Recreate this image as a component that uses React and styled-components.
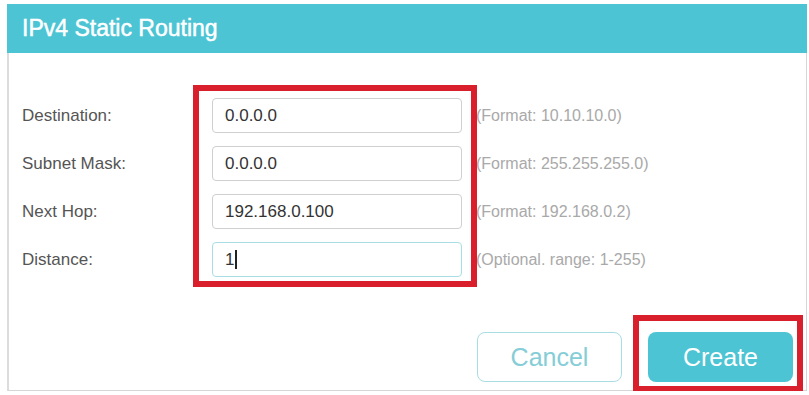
import React from "react";
import styled, { createGlobalStyle } from "styled-components";

const GlobalStyle = createGlobalStyle`
  html, body {
    margin: 0;
    padding: 0;
    background: #ffffff;
    font-family: "Liberation Sans", Arial, sans-serif;
  }
`;

const TEAL = "#4cc4d4";
const RED = "#d81f2b";

const App = () => {
  const rows = [
    { label: "Destination:", value: "0.0.0.0", hint: "(Format: 10.10.10.0)" },
    { label: "Subnet Mask:", value: "0.0.0.0", hint: "(Format: 255.255.255.0)" },
    { label: "Next Hop:", value: "192.168.0.100", hint: "(Format: 192.168.0.2)" },
    { label: "Distance:", value: "1", hint: "(Optional. range: 1-255)", focused: true },
  ];

  return (
    <>
      <GlobalStyle />
      <Panel>
        <Header>IPv4 Static Routing</Header>
        <Body>
          <Form>
            {rows.map((r, i) => (
              <React.Fragment key={i}>
                <Label $row={i + 1}>{r.label}</Label>
                <Field $row={i + 1} $focused={r.focused}>
                  {r.value}
                  {r.focused && <Caret />}
                </Field>
                <Hint $row={i + 1}>{r.hint}</Hint>
              </React.Fragment>
            ))}
            <Highlight />
          </Form>
          <Footer>
            <CancelButton>Cancel</CancelButton>
            <Marked>
              <CreateButton>Create</CreateButton>
            </Marked>
          </Footer>
        </Body>
      </Panel>
    </>
  );
};

export default App;

// ---------------- Styled Components ----------------
const Panel = styled.div`
  margin: 4px 0 0 7px;
  width: 800px;
  height: 387px;
  box-sizing: border-box;
  border: 1px solid #d6d6d6;
  border-top: none;
  border-left: 2px solid #dcdcdc;
  background: #fff;
  display: flex;
  flex-direction: column;
`;

const Header = styled.div`
  height: 49px;
  background: ${TEAL};
  color: #fff;
  font-size: 23px;
  font-weight: 400;
  -webkit-text-stroke: 0.5px #fff;
  display: flex;
  align-items: center;
  padding-left: 15px;
  margin-left: -2px;
  margin-right: -1px;
`;

const Body = styled.div`
  padding: 45px 13px 0 13px;
  display: flex;
  flex-direction: column;
`;

const Form = styled.div`
  display: grid;
  grid-template-columns: 190px 250px auto;
  grid-auto-rows: 35px;
  row-gap: 13px;
  align-items: center;
`;

const Label = styled.div`
  grid-column: 1;
  grid-row: ${(p) => p.$row};
  font-size: 17px;
  color: #555;
`;

const Field = styled.div`
  grid-column: 2;
  grid-row: ${(p) => p.$row};
  height: 35px;
  box-sizing: border-box;
  border: 1px solid ${(p) => (p.$focused ? "#a9dde4" : "#cfcfcf")};
  border-radius: 4px;
  padding-left: 12px;
  display: flex;
  align-items: center;
  font-size: 17px;
  color: #333;
  background: #fff;
`;

const Caret = styled.span`
  display: inline-block;
  width: 1.5px;
  height: 19px;
  background: #222;
  margin-left: 1px;
`;

const Hint = styled.div`
  grid-column: 3;
  grid-row: ${(p) => p.$row};
  padding-left: 14px;
  font-size: 16px;
  color: #a9a9a9;
`;

const Highlight = styled.div`
  grid-column: 2;
  grid-row: 1 / span 4;
  align-self: stretch;
  margin: -13px -15px -10px -19px;
  border: 6px solid ${RED};
  pointer-events: none;
`;

const Footer = styled.div`
  margin-top: 55px;
  display: flex;
  justify-content: flex-end;
  align-items: center;
  gap: 26px;
`;

const ButtonBase = styled.button`
  width: 145px;
  height: 50px;
  border-radius: 8px;
  font-family: "Liberation Sans", Arial, sans-serif;
  font-size: 25px;
  cursor: pointer;
  box-sizing: border-box;
`;

const CancelButton = styled(ButtonBase)`
  background: #fff;
  border: 1.5px solid #a8dde4;
  color: #85cdd7;
`;

const CreateButton = styled(ButtonBase)`
  background: ${TEAL};
  border: none;
  color: #fff;
`;

const Marked = styled.span`
  position: relative;
  display: inline-flex;
  &::after {
    content: "";
    position: absolute;
    left: -15px;
    right: -10px;
    top: -17px;
    bottom: -10px;
    border: 6px solid ${RED};
    pointer-events: none;
  }
`;
